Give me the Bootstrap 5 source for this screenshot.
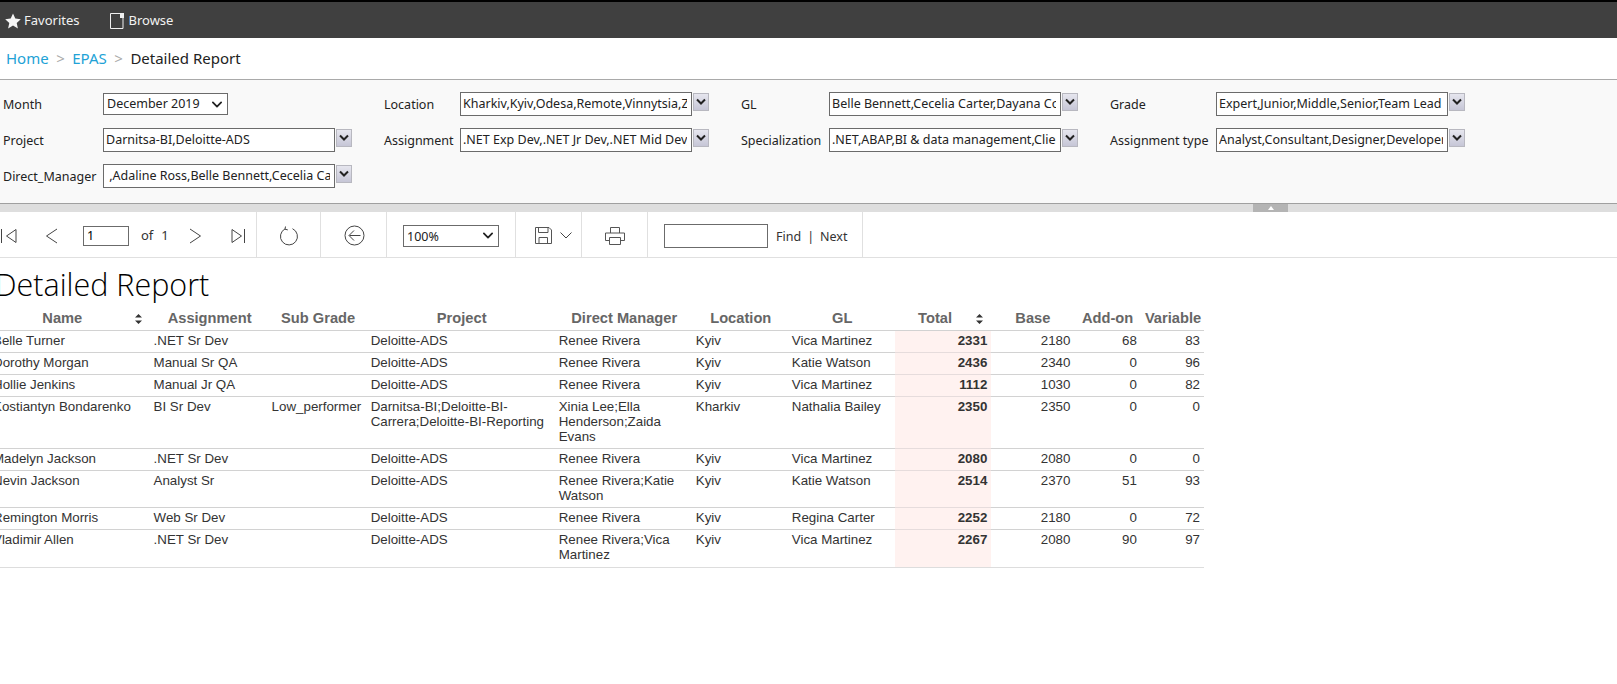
<!DOCTYPE html>
<html lang="en">
<head>
  <meta charset="UTF-8">
  <meta name="viewport" content="width=device-width, initial-scale=1.0">
  <title>Detailed Report</title>
  <link href="https://cdn.jsdelivr.net/npm/bootstrap@5.3.2/dist/css/bootstrap.min.css" rel="stylesheet">
  <style>
    body {
      font-family: "Noto Sans", "Open Sans", sans-serif;
      font-size: 13px;
      color: #222;
      background: #fff;
      overflow-x: hidden;
    }
    /* top bar */
    .top-bar {
      height: 38px;
      background: #404040;
      border-top: 2px solid #000;
      color: #f2f2f2;
      font-size: 13px;
      padding: 2px 0 0 5px;
    }
    .top-bar .bar-item { gap: 3px; }
    .top-bar .bar-browse { margin-left: 31px; gap: 4px; }
    /* breadcrumb */
    .crumb-bar {
      height: 42px;
      border-bottom: 1px solid #a9a9a9;
      padding-left: 6px;
      font-size: 15px;
    }
    .crumb-bar .breadcrumb {
      --bs-breadcrumb-margin-bottom: 0;
      --bs-breadcrumb-item-padding-x: 7.5px;
      --bs-breadcrumb-divider-color: #aaa;
      --bs-breadcrumb-divider: ">";
      --bs-breadcrumb-item-active-color: #222;
    }
    .crumb-bar a { color: #22a2d6; text-decoration: none; }
    /* filter panel */
    .filter-panel {
      height: 124px;
      background: #f9f9f9;
      border-bottom: 1px solid #a0a0a0;
      padding: 7px 0 0 3px;
    }
    .filter-grid {
      display: grid;
      grid-template-columns: 100px 281px 76px 281px 88px 281px 106px 249px;
      grid-auto-rows: 36px;
      align-items: center;
    }
    .filter-label { font-size: 12.5px; white-space: nowrap; }
    .multi-box { width: 249px; gap: 1px; align-items: flex-start; margin-bottom: 3px; }
    .multi-box input {
      width: 232px;
      height: 24px;
      border: 1px solid #6b6b6b;
      border-radius: 0;
      padding: 0 4px 0 2px;
      font: 12.5px "Noto Sans", sans-serif;
      color: #222;
      background: #fff;
      outline: none;
      flex: none;
    }
    .drop-btn {
      width: 16px;
      height: 18px;
      flex: none;
      margin-top: 1px;
      background: linear-gradient(#e6e6ee, #c6c6d6);
      border: 1px solid #b8b8c0;
      padding: 0;
      line-height: 0;
      display: flex;
      align-items: center;
      justify-content: center;
    }
    .plain-select {
      font-size: 12.5px;
      border: 1px solid #6b6b6b;
      border-radius: 0;
      padding: 0 20px 0 3px;
      height: 22px;
      color: #222;
      background-position: right 3px center;
      background-size: 14px 11px;
      --bs-form-select-bg-img: url("data:image/svg+xml,%3csvg xmlns='http://www.w3.org/2000/svg' viewBox='0 0 16 16'%3e%3cpath fill='none' stroke='%23222' stroke-linecap='round' stroke-linejoin='round' stroke-width='2.6' d='m2 5 6 6 6-6'/%3e%3c/svg%3e");
    }
    .month-select { width: 125px; margin-bottom: 2px; }
    .zoom-select { width: 96px; margin-left: 16px; padding-top: 2px; }
    .splitter {
      height: 8px;
      background: #dedede;
    }
    .split-handle {
      width: 35px;
      margin-left: 1253px;
      background: #b4b4b4;
      line-height: 0;
    }
    /* toolbar */
    .tool-bar {
      height: 46px;
      border-bottom: 1px solid #e0e0e0;
      color: #333;
    }
    .tool-sec {
      height: 100%;
      border-right: 1px solid #e0e0e0;
      display: flex;
      align-items: center;
      flex: none;
      padding-top: 2px;
    }
    .sec-nav { width: 257px; padding-left: 0; }
    .sec-refresh { width: 64px; justify-content: center; }
    .sec-back { width: 66px; justify-content: center; padding-left: 2px; }
    .sec-zoom { width: 129px; }
    .sec-save { width: 66px; padding-left: 19px; gap: 8px; }
    .sec-print { width: 66px; justify-content: center; }
    .sec-find { width: 215px; padding-left: 16px; }
    .page-input {
      width: 46px;
      height: 20px;
      margin-left: 25px;
      border: 1px solid #6b6b6b;
      padding: 0 3px;
      font-size: 12.5px;
      outline: none;
    }
    .find-input {
      width: 104px;
      height: 24px;
      border: 1px solid #6b6b6b;
      outline: none;
    }
    .ml-prev { margin-left: 28px; }
    .ml-of { margin-left: 12px; }
    .ml-next { margin-left: 20px; }
    .ml-last { margin-left: 29px; }
    .page-count { margin-left: 8px; }
    .find-links { margin-left: 8px; padding-top: 3px; font-size: 12.5px; gap: 6px; }
    /* report */
    .report-title {
      height: 49px;
      margin: 0 0 0 -5px;
      font-family: "Open Sans", "Noto Sans", sans-serif;
      font-weight: 300;
      font-size: 30.5px;
      line-height: 52px;
      color: #000;
    }
    .report-table {
      width: 1215px;
      margin: 0 0 0 -11px;
      table-layout: fixed;
      font-family: "Liberation Sans", Arial, sans-serif;
      font-size: 13.33px;
      line-height: 15px;
      color: #333;
    }
    .report-table > thead > tr > th,
    .report-table > tbody > tr > td {
      padding: 2px 4px 4px;
      border-bottom: 1px solid #d2d2d2;
      vertical-align: top;
      box-shadow: none;
      background: transparent;
      color: #333;
    }
    .report-table > thead > tr > th {
      padding: 3px 4px;
      font-size: 14.67px;
      line-height: 17px;
      text-align: center;
      color: #666;
      font-weight: 700;
    }
    .report-table > thead > tr > th:nth-child(-n+7) { padding-left: 6px; }
    .report-table .num { text-align: right; }
    .report-table > tbody > tr > td.total-cell {
      background: #fff2f0;
      font-weight: 700;
      border-bottom-color: #e6dcdc;
    }
    .report-table > tbody > tr:last-child > td { border-bottom-color: #ddd; padding-bottom: 5px; }
    .sort-head { display: flex; align-items: center; }
    .sort-head span { flex: 1; text-align: center; padding-right: 5px; }
    .sort-head svg { flex: none; margin-right: 4px; }
    .w-name { width: 160.5px; }
    .w-assign { width: 118px; }
    .w-sub { width: 99px; }
    .w-project { width: 188px; }
    .w-manager { width: 137px; }
    .w-location { width: 96px; }
    .w-gl { width: 107px; }
    .w-total { width: 96.5px; }
    .w-base { width: 83px; }
    .w-addon { width: 66.5px; }
    .w-variable { width: 63px; }
  </style>
</head>
<body>
  <!-- Top bar -->
  <div class="top-bar d-flex align-items-center">
    <div class="bar-item d-flex align-items-center">
      <svg width="16" height="16" viewBox="0 0 16 16"><path fill="#f5f5f5" d="M8 .5l2.3 5.1 5.5.6-4.1 3.7 1.2 5.5L8 12.6 3.100 15.400l1.200-5.500L.2 6.200l5.500-.6z"/></svg>
      <span>Favorites</span>
    </div>
    <div class="bar-item bar-browse d-flex align-items-center">
      <svg width="14" height="16" viewBox="0 0 14 16"><path fill="none" stroke="#f0f0f0" d="M.5.5h12.500v15H.5z"/><path fill="#f0f0f0" d="M10 0h4v5h-4z"/></svg>
      <span>Browse</span>
    </div>
  </div>

  <!-- Breadcrumb -->
  <nav class="crumb-bar d-flex align-items-center">
    <ol class="breadcrumb">
      <li class="breadcrumb-item"><a href="#">Home</a></li>
      <li class="breadcrumb-item"><a href="#">EPAS</a></li>
      <li class="breadcrumb-item active">Detailed Report</li>
    </ol>
  </nav>

  <!-- Filters -->
  <div class="filter-panel">
    <div class="filter-grid">
      <div class="filter-label">Month</div>
      <div>
        <select class="form-select plain-select month-select"><option>December 2019</option></select>
      </div>
      <div class="filter-label">Location</div>
      <div class="d-flex multi-box"><input type="text" value="Kharkiv,Kyiv,Odesa,Remote,Vinnytsia,Zaporizhzhia"><button class="drop-btn"><svg width="10" height="8" viewBox="0 0 10 8"><path fill="none" stroke="#222" stroke-width="2" d="M1 1.500l4 4 4-4"/></svg></button></div>
      <div class="filter-label">GL</div>
      <div class="d-flex multi-box"><input type="text" value="Belle Bennett,Cecelia Carter,Dayana Cooper"><button class="drop-btn"><svg width="10" height="8" viewBox="0 0 10 8"><path fill="none" stroke="#222" stroke-width="2" d="M1 1.500l4 4 4-4"/></svg></button></div>
      <div class="filter-label">Grade</div>
      <div class="d-flex multi-box"><input type="text" value="Expert,Junior,Middle,Senior,Team Lead"><button class="drop-btn"><svg width="10" height="8" viewBox="0 0 10 8"><path fill="none" stroke="#222" stroke-width="2" d="M1 1.500l4 4 4-4"/></svg></button></div>

      <div class="filter-label">Project</div>
      <div class="d-flex multi-box"><input type="text" value="Darnitsa-BI,Deloitte-ADS"><button class="drop-btn"><svg width="10" height="8" viewBox="0 0 10 8"><path fill="none" stroke="#222" stroke-width="2" d="M1 1.500l4 4 4-4"/></svg></button></div>
      <div class="filter-label">Assignment</div>
      <div class="d-flex multi-box"><input type="text" value=".NET Exp Dev,.NET Jr Dev,.NET Mid Dev,.NET Sr Dev"><button class="drop-btn"><svg width="10" height="8" viewBox="0 0 10 8"><path fill="none" stroke="#222" stroke-width="2" d="M1 1.500l4 4 4-4"/></svg></button></div>
      <div class="filter-label">Specialization</div>
      <div class="d-flex multi-box"><input type="text" value=".NET,ABAP,BI &amp; data management,Client"><button class="drop-btn"><svg width="10" height="8" viewBox="0 0 10 8"><path fill="none" stroke="#222" stroke-width="2" d="M1 1.500l4 4 4-4"/></svg></button></div>
      <div class="filter-label">Assignment type</div>
      <div class="d-flex multi-box"><input type="text" value="Analyst,Consultant,Designer,Developer"><button class="drop-btn"><svg width="10" height="8" viewBox="0 0 10 8"><path fill="none" stroke="#222" stroke-width="2" d="M1 1.500l4 4 4-4"/></svg></button></div>

      <div class="filter-label">Direct_Manager</div>
      <div class="d-flex multi-box"><input type="text" value=" ,Adaline Ross,Belle Bennett,Cecelia Carter"><button class="drop-btn"><svg width="10" height="8" viewBox="0 0 10 8"><path fill="none" stroke="#222" stroke-width="2" d="M1 1.500l4 4 4-4"/></svg></button></div>
    </div>
  </div>

  <div class="splitter d-flex">
    <div class="split-handle d-flex align-items-center justify-content-center">
      <svg width="6" height="4" viewBox="0 0 6 4"><path fill="#fff" d="M3 0l3 4H0z"/></svg>
    </div>
  </div>

  <!-- Report toolbar -->
  <div class="tool-bar d-flex">
    <div class="tool-sec sec-nav">
      <svg width="17" height="16" viewBox="0 0 17 16"><path fill="none" stroke="#444" d="M1.500 1v14M16 1.500v13L6.500 8z"/></svg>
      <svg class="ml-prev" width="13" height="16" viewBox="0 0 13 16"><path fill="none" stroke="#444" d="M12 1L1.500 8 12 15"/></svg>
      <input class="page-input" type="text" value="1">
      <span class="ml-of">of</span>
      <span class="page-count">1</span>
      <svg class="ml-next" width="13" height="16" viewBox="0 0 13 16"><path fill="none" stroke="#444" d="M1 1l10.500 7L1 15"/></svg>
      <svg class="ml-last" width="15" height="16" viewBox="0 0 15 16"><path fill="none" stroke="#444" d="M13.500 1v14M1 1.500v13L10.500 8z"/></svg>
    </div>
    <div class="tool-sec sec-refresh">
      <svg width="20" height="20" viewBox="0 0 20 20"><path fill="none" stroke="#444" d="M13.500 2.700a8.500 8.500 0 1 1-7.500.2"/><path fill="none" stroke="#444" d="M6.500.5l-.5 2.700 2.800.7"/></svg>
    </div>
    <div class="tool-sec sec-back">
      <svg width="21" height="21" viewBox="0 0 21 21"><circle cx="10.500" cy="10.500" r="9.500" fill="none" stroke="#444"/><path fill="none" stroke="#444" d="M16.500 10.500h-11M10 5.500l-5 5 5 5"/></svg>
    </div>
    <div class="tool-sec sec-zoom">
      <select class="form-select plain-select zoom-select"><option>100%</option></select>
    </div>
    <div class="tool-sec sec-save">
      <svg width="17" height="17" viewBox="0 0 17 17"><path fill="none" stroke="#555" d="M.5.500h13.500l2.500 2.500v13.500H.5z"/><path fill="none" stroke="#555" d="M3.500.500v5h9.500v-5M4 16.500v-6h8.500v6"/></svg>
      <svg width="12" height="7" viewBox="0 0 12 7"><path fill="none" stroke="#444" d="M.5.500L6 6 11.500.5"/></svg>
    </div>
    <div class="tool-sec sec-print">
      <svg width="20" height="18" viewBox="0 0 20 18"><path fill="none" stroke="#555" d="M5.500 6V.5h9V6M4.500 13.500h-4V6h19v7.500h-4M4.500 10.500h11v7h-11z"/></svg>
    </div>
    <div class="tool-sec sec-find">
      <input class="find-input" type="text">
      <div class="find-links d-flex"><span>Find</span><span>|</span><span>Next</span></div>
    </div>
  </div>

  <!-- Report body -->
  <h1 class="report-title">Detailed Report</h1>
  <table class="table report-table">
    <colgroup>
      <col class="w-name"><col class="w-assign"><col class="w-sub"><col class="w-project"><col class="w-manager"><col class="w-location"><col class="w-gl"><col class="w-total"><col class="w-base"><col class="w-addon"><col class="w-variable">
    </colgroup>
    <thead>
      <tr>
        <th><div class="sort-head"><span>Name</span><svg width="7" height="12" viewBox="0 0 7 12"><path fill="#333" d="M3.500 1L7 4.500H0zM3.500 11L0 7.500h7z"/></svg></div></th>
        <th>Assignment</th>
        <th>Sub Grade</th>
        <th>Project</th>
        <th>Direct Manager</th>
        <th>Location</th>
        <th>GL</th>
        <th><div class="sort-head"><span>Total</span><svg width="7" height="12" viewBox="0 0 7 12"><path fill="#333" d="M3.500 1L7 4.500H0zM3.500 11L0 7.500h7z"/></svg></div></th>
        <th>Base</th>
        <th>Add-on</th>
        <th>Variable</th>
      </tr>
    </thead>
    <tbody>
      <tr><td>Belle Turner</td><td>.NET Sr Dev</td><td></td><td>Deloitte-ADS</td><td>Renee Rivera</td><td>Kyiv</td><td>Vica Martinez</td><td class="num total-cell">2331</td><td class="num">2180</td><td class="num">68</td><td class="num">83</td></tr>
      <tr><td>Dorothy Morgan</td><td>Manual Sr QA</td><td></td><td>Deloitte-ADS</td><td>Renee Rivera</td><td>Kyiv</td><td>Katie Watson</td><td class="num total-cell">2436</td><td class="num">2340</td><td class="num">0</td><td class="num">96</td></tr>
      <tr><td>Hollie Jenkins</td><td>Manual Jr QA</td><td></td><td>Deloitte-ADS</td><td>Renee Rivera</td><td>Kyiv</td><td>Vica Martinez</td><td class="num total-cell">1112</td><td class="num">1030</td><td class="num">0</td><td class="num">82</td></tr>
      <tr><td>Kostiantyn Bondarenko</td><td>BI Sr Dev</td><td>Low_performer</td><td>Darnitsa-BI;Deloitte-BI-Carrera;Deloitte-BI-Reporting</td><td>Xinia Lee;Ella Henderson;Zaida Evans</td><td>Kharkiv</td><td>Nathalia Bailey</td><td class="num total-cell">2350</td><td class="num">2350</td><td class="num">0</td><td class="num">0</td></tr>
      <tr><td>Madelyn Jackson</td><td>.NET Sr Dev</td><td></td><td>Deloitte-ADS</td><td>Renee Rivera</td><td>Kyiv</td><td>Vica Martinez</td><td class="num total-cell">2080</td><td class="num">2080</td><td class="num">0</td><td class="num">0</td></tr>
      <tr><td>Nevin Jackson</td><td>Analyst Sr</td><td></td><td>Deloitte-ADS</td><td>Renee Rivera;Katie Watson</td><td>Kyiv</td><td>Katie Watson</td><td class="num total-cell">2514</td><td class="num">2370</td><td class="num">51</td><td class="num">93</td></tr>
      <tr><td>Remington Morris</td><td>Web Sr Dev</td><td></td><td>Deloitte-ADS</td><td>Renee Rivera</td><td>Kyiv</td><td>Regina Carter</td><td class="num total-cell">2252</td><td class="num">2180</td><td class="num">0</td><td class="num">72</td></tr>
      <tr><td>Vladimir Allen</td><td>.NET Sr Dev</td><td></td><td>Deloitte-ADS</td><td>Renee Rivera;Vica Martinez</td><td>Kyiv</td><td>Vica Martinez</td><td class="num total-cell">2267</td><td class="num">2080</td><td class="num">90</td><td class="num">97</td></tr>
    </tbody>
  </table>

  <script src="https://cdn.jsdelivr.net/npm/bootstrap@5.3.2/dist/js/bootstrap.bundle.min.js"></script>
</body>
</html>
